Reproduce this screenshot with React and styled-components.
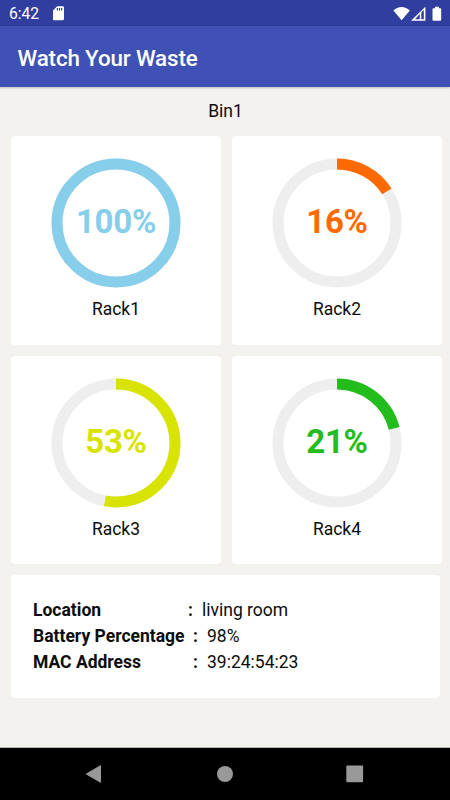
import React from "react";
import styled, { createGlobalStyle } from "styled-components";

const racks = [
  { name: "Rack1", value: 100, color: "#87ceeb" },
  { name: "Rack2", value: 16, color: "#ff6a00" },
  { name: "Rack3", value: 53, color: "#d9e300" },
  { name: "Rack4", value: 21, color: "#22bd1c" },
];

const details = [
  { label: "Location", value: "living room", labelWidth: 155 },
  { label: "Battery Percentage", value: "98%", labelWidth: 160 },
  { label: "MAC Address", value: "39:24:54:23", labelWidth: 160 },
];

const Gauge = ({ value, color }) => (
  <Ring>
    <svg width="130" height="130" viewBox="0 0 130 130">
      <circle cx="65" cy="65" r="59" fill="none" stroke="#eeeeee" strokeWidth="11" />
      <circle
        cx="65"
        cy="65"
        r="59"
        fill="none"
        stroke={color}
        strokeWidth="11"
        pathLength="100"
        strokeDasharray={value === 100 ? undefined : `${value} ${100 - value}`}
        transform="rotate(-90 65 65)"
      />
    </svg>
    <Percent $color={color}>{value}%</Percent>
  </Ring>
);

const App = () => {
  return (
    <Screen>
      <GlobalStyle />
      <StatusBar>
        <Clock>6:42</Clock>
        <svg width="12" height="15" viewBox="0 0 12 15">
          <path
            fill="#fff"
            fillRule="evenodd"
            d="M4.2.3H9.6A1.4 1.4 0 0 1 11 1.7v11.1a1.4 1.4 0 0 1-1.4 1.4H1.2A1.4 1.4 0 0 1-.2 12.8V4.6zM3.8 2v2.4h1.2V2zm2.1 0v2.4h1.2V2zM8 2v2.4h1.2V2z"
          />
        </svg>
        <Signals width="50" height="16" viewBox="0 0 50 16">
          <path fill="#fff" d="M.4 4.6C5-.2 12.2-.2 16.8 4.6L8.6 14.2z" />
          <path
            fill="#fff"
            fillRule="evenodd"
            d="M32.4.7v14H18zM26.8 8.1l-4.8 5.1h4.8zM28.3 6.5v6.7h2.5V4.1z"
          />
          <path
            fill="#fff"
            d="M42 .8h4v1.4h1.2a1 1 0 0 1 1 1v10.5a1 1 0 0 1-1 1h-6.7a1 1 0 0 1-1-1V3.2a1 1 0 0 1 1-1H42z"
          />
        </Signals>
      </StatusBar>
      <AppBar>Watch Your Waste</AppBar>
      <Content>
        <BinName>Bin1</BinName>
        <Grid>
          {racks.map((rack) => (
            <Card key={rack.name}>
              <Gauge value={rack.value} color={rack.color} />
              <RackName>{rack.name}</RackName>
            </Card>
          ))}
        </Grid>
        <Info>
          {details.map((item) => (
            <Row key={item.label}>
              <Label $width={item.labelWidth}>{item.label}</Label>
              <Colon>:</Colon>
              <span>{item.value}</span>
            </Row>
          ))}
        </Info>
      </Content>
      <NavBar>
        <svg width="18" height="20" viewBox="0 0 18 20">
          <path fill="#999" stroke="#999" strokeLinejoin="round" d="M1.3 10 15.5 1.7v16.6z" />
        </svg>
        <svg width="18" height="20" viewBox="0 0 18 20">
          <circle cx="9" cy="10" r="8" fill="#999" />
        </svg>
        <svg width="18" height="20" viewBox="0 0 18 20">
          <rect x=".3" y="1.5" width="16.8" height="16.8" rx="1" fill="#999" />
        </svg>
      </NavBar>
    </Screen>
  );
};

const GlobalStyle = createGlobalStyle`
  * {
    box-sizing: border-box;
  }
  body {
    margin: 0;
    font-family: Roboto, sans-serif;
    color: #0c0c0c;
  }
  svg {
    display: block;
  }
`;

const Screen = styled.div`
  width: 450px;
  height: 800px;
  display: flex;
  flex-direction: column;
  overflow: hidden;
  background-color: #f3f2ee;
`;

const StatusBar = styled.div`
  height: 26px;
  flex-shrink: 0;
  display: flex;
  align-items: center;
  padding: 1px 0 0 9px;
  background-color: #303f9f;
`;

const Clock = styled.span`
  width: 44px;
  font-size: 15.6px;
  line-height: 26px;
  color: #fff;
`;

const Signals = styled.svg`
  margin: 0 7px 0 auto;
`;

const AppBar = styled.header`
  height: 61px;
  flex-shrink: 0;
  padding: 2px 0 0 17.5px;
  background-color: #3f51b5;
  box-shadow: 0 1px 2px rgba(0, 0, 0, 0.22);
  color: #fff;
  font-size: 22.4px;
  font-weight: 500;
  letter-spacing: -0.16px;
  line-height: 60px;
`;

const Content = styled.main`
  flex: 1;
  padding: 11px 8px 0 11px;
`;

const BinName = styled.div`
  height: 38px;
  padding-right: 2px;
  text-align: center;
  font-size: 17.5px;
  line-height: 26px;
`;

const Grid = styled.div`
  display: grid;
  grid-template-columns: 210px 210px;
  grid-auto-rows: 208.5px;
  gap: 11px;
`;

const Card = styled.div`
  display: flex;
  flex-direction: column;
  align-items: center;
  padding-top: 22px;
  border-radius: 4px;
  background-color: #fff;
`;

const Ring = styled.div`
  display: grid;
  place-items: center;
  > * {
    grid-area: 1 / 1;
  }
`;

const Percent = styled.span`
  font-size: 33px;
  font-weight: 700;
  letter-spacing: -0.3px;
  line-height: 40px;
  padding-bottom: 2px;
  color: ${(props) => props.$color};
`;

const RackName = styled.div`
  margin-top: 8px;
  font-size: 17.5px;
  line-height: 26px;
`;

const Info = styled.section`
  width: 429px;
  height: 122.5px;
  margin-top: 11px;
  padding: 22px;
  border-radius: 4px;
  background-color: #fff;
`;

const Row = styled.div`
  display: flex;
  font-size: 17.5px;
  line-height: 26.2px;
`;

const Label = styled.span`
  width: ${(props) => props.$width}px;
  font-weight: 700;
`;

const Colon = styled.span`
  width: 14px;
  font-weight: 700;
`;

const NavBar = styled.nav`
  height: 52px;
  flex-shrink: 0;
  display: flex;
  justify-content: space-between;
  align-items: center;
  padding: 0 86px 0 85px;
  background-color: #000;
  box-shadow: 0 -1px 0 #b5b4b0;
`;

export default App;
